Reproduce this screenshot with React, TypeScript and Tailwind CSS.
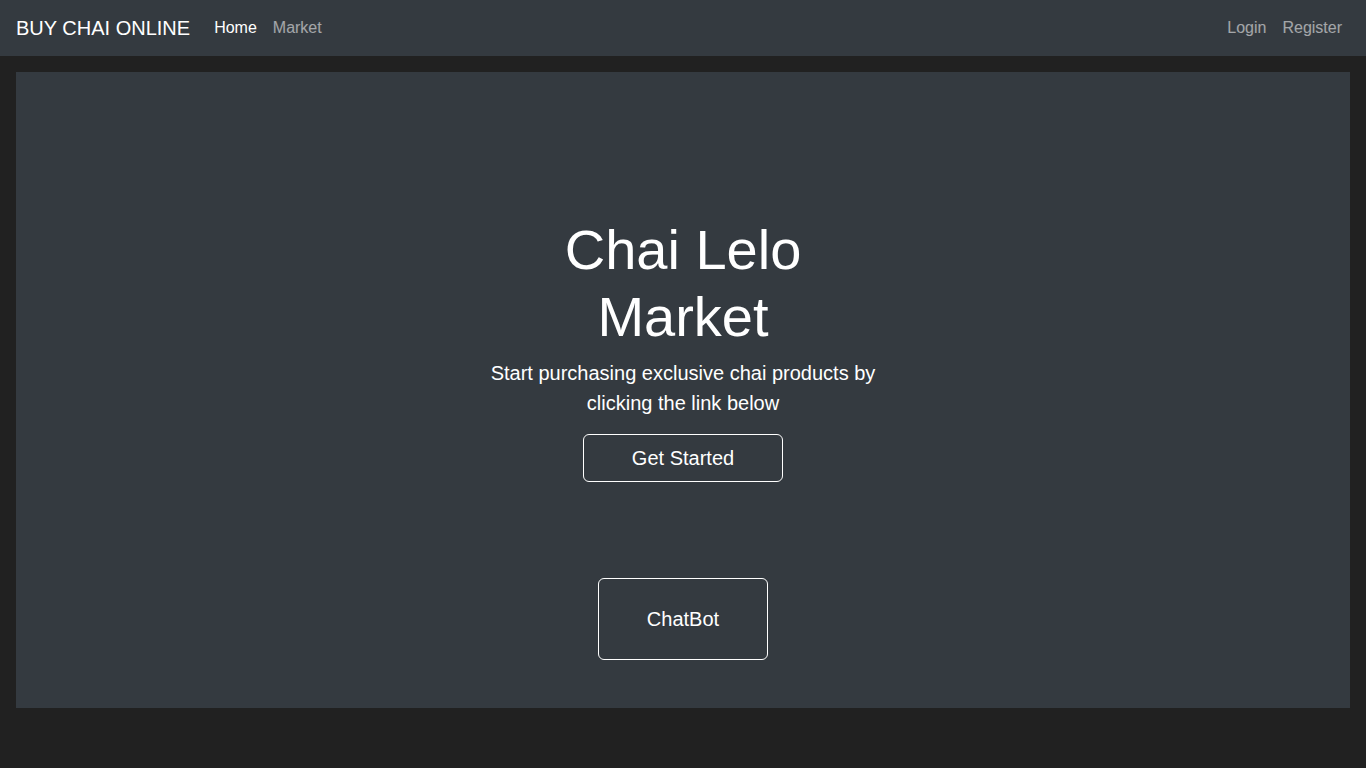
export default function App() {
  return (
    <div className="min-h-[768px] bg-[#212121] font-['Liberation_Sans',Arial,sans-serif] text-white">
      <nav className="flex h-14 items-center bg-[#343a40] px-4">
        <a className="mr-4 text-[20px] leading-[30px] text-white">BUY CHAI ONLINE</a>
        <ul className="flex items-center text-[16px] leading-6">
          <li className="px-2 text-white">Home</li>
          <li className="px-2 text-white/55">Market</li>
        </ul>
        <ul className="ml-auto flex items-center text-[16px] leading-6">
          <li className="px-2 text-white/55">Login</li>
          <li className="px-2 text-white/55">Register</li>
        </ul>
      </nav>

      <main className="px-4 pt-4">
        <section className="flex h-[636px] flex-col items-center bg-[#343a40] pt-[144px]">
          <div className="flex w-[400px] flex-col items-center text-center">
            <h1 className="mb-2 text-[56px] leading-[1.2] font-normal">Chai Lelo Market</h1>
            <p className="mb-4 text-[20px] leading-[30px]">
              Start purchasing exclusive chai products by clicking the link below
            </p>
            <button className="h-12 w-[200px] rounded-md border border-white text-[20px] text-white">
              Get Started
            </button>
          </div>
          <button className="mt-[96px] h-[82px] w-[170px] rounded-md border border-white text-[20px] text-white">
            ChatBot
          </button>
        </section>
      </main>
    </div>
  );
}
